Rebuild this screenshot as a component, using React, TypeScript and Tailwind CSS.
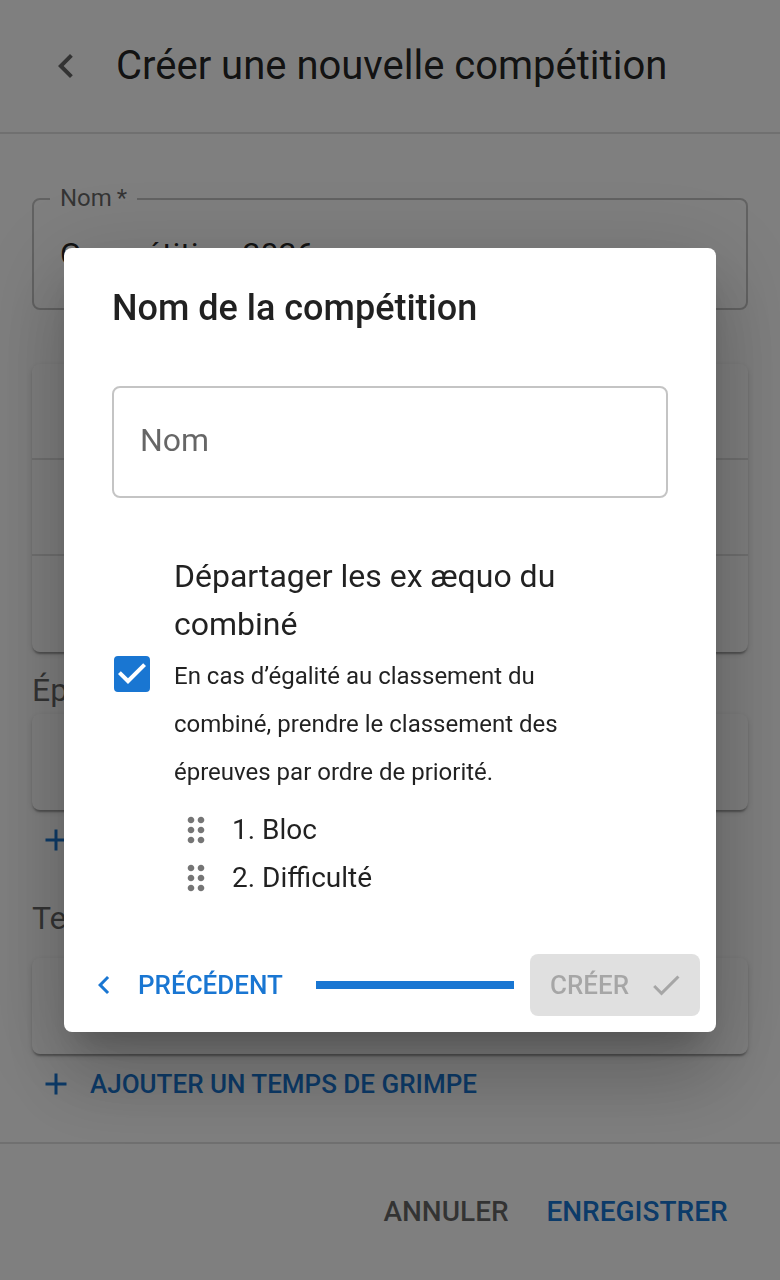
import { useState } from "react";

type IconProps = { className?: string };

function ChevronLeft({ className }: IconProps) {
  return (
    <svg viewBox="0 0 24 24" fill="currentColor" aria-hidden="true" className={className}>
      <path d="M15.41 7.41 14 6l-6 6 6 6 1.41-1.41L10.83 12z" />
    </svg>
  );
}

function Plus({ className }: IconProps) {
  return (
    <svg viewBox="0 0 24 24" fill="currentColor" aria-hidden="true" className={className}>
      <path d="M19 13h-6v6h-2v-6H5v-2h6V5h2v6h6v2z" />
    </svg>
  );
}

function Check({ className }: IconProps) {
  return (
    <svg viewBox="0 0 24 24" fill="currentColor" aria-hidden="true" className={className}>
      <path d="M9 16.17 4.83 12l-1.42 1.41L9 19 21 7l-1.41-1.41z" />
    </svg>
  );
}

function DragHandle({ className }: IconProps) {
  return (
    <svg viewBox="0 0 24 24" fill="currentColor" aria-hidden="true" className={className}>
      <path d="M11 18c0 1.1-.9 2-2 2s-2-.9-2-2 .9-2 2-2 2 .9 2 2zm-2-8c-1.1 0-2 .9-2 2s.9 2 2 2 2-.9 2-2-.9-2-2-2zm0-6c-1.1 0-2 .9-2 2s.9 2 2 2 2-.9 2-2-.9-2-2-2zm6 4c1.1 0 2-.9 2-2s-.9-2-2-2-2 .9-2 2 .9 2 2 2zm0 2c-1.1 0-2 .9-2 2s.9 2 2 2 2-.9 2-2-.9-2-2-2zm0 6c-1.1 0-2 .9-2 2s.9 2 2 2 2-.9 2-2-.9-2-2-2z" />
    </svg>
  );
}

function Panel({ rows }: { rows: number }) {
  return (
    <div className="divide-y-2 divide-black/12 rounded-lg bg-white shadow-[0_4px_2px_-2px_rgba(0,0,0,0.2),0_2px_2px_0_rgba(0,0,0,0.14),0_2px_6px_0_rgba(0,0,0,0.12)]">
      {Array.from({ length: rows }, (_, i) => (
        <div key={i} className="h-24" />
      ))}
    </div>
  );
}

function CompetitionPage() {
  const [name, setName] = useState("Compétition 2026");
  return (
    <div className="flex min-h-screen flex-col">
      <header className="flex h-[134px] items-center gap-[26px] border-b-2 border-black/12 px-[42px]">
        <button type="button" aria-label="Retour" className="text-black/60">
          <ChevronLeft className="size-12" />
        </button>
        <h1 className="text-[40px] leading-[64px]">Créer une nouvelle compétition</h1>
      </header>

      <main className="flex grow flex-col px-8 pt-16 pb-7">
        <div className="relative">
          <label
            htmlFor="competition-name"
            className="absolute -top-4 left-[18px] bg-white px-2.5 text-2xl text-black/60"
          >
            Nom&#8201;*
          </label>
          <input
            id="competition-name"
            required
            value={name}
            onChange={(e) => setName(e.target.value)}
            className="h-28 w-full rounded-lg border-2 border-black/23 px-[26px] text-[32px]"
          />
        </div>

        <div className="mt-[54px]">
          <Panel rows={3} />
        </div>

        <h2 className="mt-3.5 text-[32px] leading-12 text-black/60">Épreuves</h2>
        <Panel rows={1} />
        <button
          type="button"
          aria-label="Ajouter une épreuve"
          className="flex h-15 items-center self-start px-1.5 text-[#1976d2]"
        >
          <Plus className="size-9" />
        </button>

        <h2 className="mt-6 mb-4 text-[32px] leading-12 text-black/60">Temps de grimpe</h2>
        <Panel rows={1} />
        <button
          type="button"
          className="flex h-15 items-center gap-4 self-start px-1.5 text-[26px] font-medium text-[#1976d2] uppercase"
        >
          <Plus className="size-9" />
          Ajouter un temps de grimpe
        </button>
      </main>

      <footer className="flex items-center justify-end border-t-2 border-black/12 px-8 py-8 text-[28px] font-medium">
        <button type="button" className="h-[72px] min-w-40 px-4 text-black/60 uppercase">
          Annuler
        </button>
        <button type="button" className="h-[72px] min-w-[222px] px-4 text-[#1976d2] uppercase">
          Enregistrer
        </button>
      </footer>
    </div>
  );
}

const priorities = ["Bloc", "Difficulté"];

function NameDialog() {
  const [name, setName] = useState("");
  const [tieBreak, setTieBreak] = useState(true);
  return (
    <div className="fixed inset-0 flex items-center justify-center bg-black/50 px-16">
      <div
        role="dialog"
        aria-modal="true"
        aria-labelledby="dialog-title"
        className="w-full rounded-lg bg-white shadow-[0_22px_30px_-14px_rgba(0,0,0,0.2),0_48px_76px_6px_rgba(0,0,0,0.14),0_18px_92px_16px_rgba(0,0,0,0.12)]"
      >
        <h2 id="dialog-title" className="px-12 pt-8 text-4xl leading-[56px] font-medium">
          Nom de la compétition
        </h2>

        <div className="px-12 pt-[50px] pb-9">
          <input
            aria-label="Nom"
            placeholder="Nom"
            value={name}
            onChange={(e) => setName(e.target.value)}
            className="h-28 w-full rounded-lg border-2 border-black/23 px-[26px] pb-1 text-[32px] placeholder:text-black/60"
          />

          <div className="mt-[54px] flex items-center gap-6 pl-0.5">
            <span className="relative flex size-9 shrink-0">
              <input
                id="tie-break"
                type="checkbox"
                checked={tieBreak}
                onChange={(e) => setTieBreak(e.target.checked)}
                className="size-9 appearance-none rounded border-4 border-black/60 checked:border-[#1976d2] checked:bg-[#1976d2]"
              />
              {tieBreak && (
                <svg
                  viewBox="3 3 18 18"
                  fill="white"
                  aria-hidden="true"
                  className="pointer-events-none absolute inset-0 size-9"
                >
                  <path d="m10 17-5-5 1.41-1.41L10 14.17l7.59-7.59L19 8z" />
                </svg>
              )}
            </span>
            <label htmlFor="tie-break" className="block max-w-[440px]">
              <span className="block text-[32px] leading-12">Départager les ex æquo du combiné</span>
              <span className="mt-1 block text-2xl leading-12">
                En cas d’égalité au classement du combiné, prendre le classement des épreuves par ordre
                de priorité.
              </span>
            </label>
          </div>

          <ol className="mt-2.5 pl-16 text-[28px] leading-12">
            {priorities.map((event, i) => (
              <li key={event} className="flex items-center gap-4">
                <DragHandle className="size-10 text-black/54" />
                {i + 1}. {event}
              </li>
            ))}
          </ol>
        </div>

        <div className="flex items-center gap-4 p-4 text-[26px] font-medium">
          <button
            type="button"
            className="flex h-[62px] min-w-[220px] items-center gap-4 px-1.5 text-[#1976d2] uppercase"
          >
            <ChevronLeft className="size-9" />
            Précédent
          </button>
          <div
            role="progressbar"
            aria-label="Progression"
            aria-valuenow={100}
            className="h-2 grow bg-[#1976d2]"
          />
          <button
            type="button"
            disabled
            className="flex h-[62px] min-w-[170px] items-center justify-between rounded-lg bg-black/12 pr-4 pl-5 text-black/26 uppercase"
          >
            Créer
            <Check className="size-9" />
          </button>
        </div>
      </div>
    </div>
  );
}

export default function App() {
  return (
    <div className="bg-white font-[Roboto,sans-serif] text-black/87">
      <CompetitionPage />
      <NameDialog />
    </div>
  );
}
